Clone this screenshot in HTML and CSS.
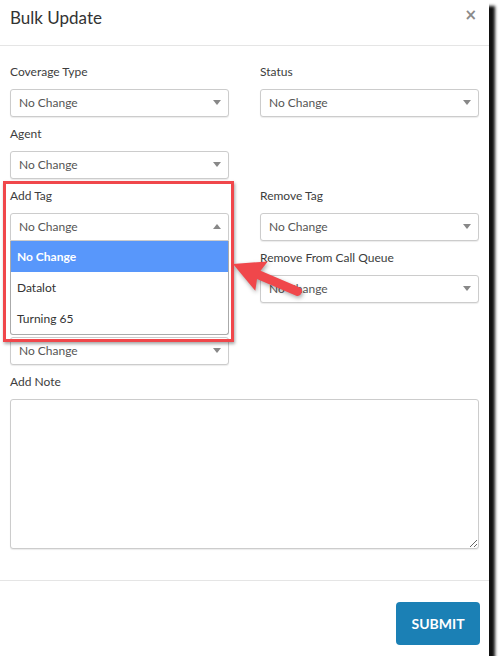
FILE: index.html
```html
<!DOCTYPE html>
<html>
<head>
<meta charset="utf-8">
<link rel="stylesheet" href="styles.css">
</head>
<body>
<div class="modal">
  <div class="header">
    <h1 class="title">Bulk Update</h1>
    <span class="close">×</span>
  </div>
  <div class="body">
    <div class="grid">
      <div class="group">
        <label class="label">Coverage Type</label>
        <div class="select"><span>No Change</span><i class="caret"></i></div>
      </div>
      <div class="group">
        <label class="label">Status</label>
        <div class="select"><span>No Change</span><i class="caret"></i></div>
      </div>
      <div class="group">
        <label class="label">Agent</label>
        <div class="select"><span>No Change</span><i class="caret"></i></div>
      </div>
      <div class="group"></div>
      <div class="group open-group">
        <label class="label">Add Tag</label>
        <div class="select open"><span>No Change</span><i class="caret up"></i></div>
        <ul class="dropdown">
          <li class="opt active">No Change</li>
          <li class="opt">Datalot</li>
          <li class="opt">Turning 65</li>
        </ul>
      </div>
      <div class="group">
        <label class="label">Remove Tag</label>
        <div class="select"><span>No Change</span><i class="caret"></i></div>
      </div>
      <div class="group">
        <label class="label"></label>
        <div class="select"><span></span><i class="caret"></i></div>
      </div>
      <div class="group">
        <label class="label">Remove From Call Queue</label>
        <div class="select"><span>No Change</span><i class="caret"></i></div>
      </div>
      <div class="group">
        <label class="label"></label>
        <div class="select"><span>No Change</span><i class="caret"></i></div>
      </div>
      <div class="group"></div>
    </div>
    <div class="note">
      <label class="label">Add Note</label>
      <textarea class="textarea"></textarea>
    </div>
  </div>
  <div class="footer">
    <button class="submit">SUBMIT</button>
  </div>

  <div class="highlight"></div>
  <svg class="arrow" width="90" height="60" viewBox="0 0 90 60">
    <g transform="translate(8 19) rotate(23)">
      <path d="M0 0 L31 -16 L28 -4.5 L70 -4.5 Q74.5 -4.5 74.5 0 Q74.5 4.5 70 4.5 L28 4.5 L31 16 Z" fill="#f0474b"/>
    </g>
  </svg>
</div>
</body>
</html>
```
FILE: styles.css
```css
html, body {
  margin: 0;
  padding: 0;
  background: #fff;
}
body {
  font-family: Lato, "Noto Sans", sans-serif;
  color: #333;
}
.modal {
  position: relative;
  width: 489px;
  height: 656px;
  background: #fff;
  box-shadow: 6px 6px 3px #111;
  display: flex;
  flex-direction: column;
}
.header {
  box-sizing: border-box;
  height: 46px;
  border-bottom: 1px solid #e5e5e5;
  padding: 7px 12px 0 10px;
  display: flex;
  justify-content: space-between;
  align-items: flex-start;
}
.title {
  margin: 0;
  font-size: 17px;
  font-weight: 400;
  line-height: 22px;
  color: #333;
}
.close {
  font-family: "DejaVu Sans", sans-serif;
  font-size: 15px;
  font-weight: 700;
  color: #8a8a8a;
  line-height: 16px;
  margin-top: 0;
}
.body {
  padding: 17px 10px 31px 10px;
  flex: 1;
}
.grid {
  display: grid;
  grid-template-columns: 219px 219px;
  column-gap: 31px;
}
.group {
  position: relative;
  height: 62px;
}
.label {
  display: block;
  font-size: 12px;
  line-height: 18px;
  height: 18px;
  margin-bottom: 8px;
  color: #3d3d3d;
}
.select {
  box-sizing: border-box;
  height: 28px;
  border: 1px solid #ccc;
  border-radius: 3px;
  box-shadow: 0 1px 1px rgba(0,0,0,0.08);
  display: flex;
  align-items: center;
  justify-content: space-between;
  padding: 0 7px 0 8px;
  font-size: 12px;
  color: #555;
  background: #fff;
}
.select.open {
  border-bottom-left-radius: 0;
  border-bottom-right-radius: 0;
}
.caret {
  width: 0;
  height: 0;
  border-style: solid;
  border-width: 5px 4px 0 4px;
  border-color: #888 transparent transparent transparent;
}
.caret.up {
  border-width: 0 4px 5px 4px;
  border-color: transparent transparent #888 transparent;
}
.dropdown {
  position: absolute;
  top: 54px;
  left: 0;
  width: 219px;
  box-sizing: border-box;
  margin: 0;
  padding: 0;
  list-style: none;
  background: #fff;
  border: 1px solid #aaa;
  border-top: none;
  border-radius: 0 0 3px 3px;
  z-index: 2;
}
.opt {
  height: 31px;
  line-height: 31px;
  padding: 0 6px;
  font-size: 12px;
  color: #333;
}
.opt.active {
  background: #5897fb;
  color: #fff;
  font-weight: 700;
}
.note .label {
  margin-bottom: 8px;
}
.textarea {
  display: block;
  box-sizing: border-box;
  width: 469px;
  height: 150px;
  margin: 0;
  border: 1px solid #ccc;
  border-radius: 3px;
  box-shadow: 0 1px 1px rgba(0,0,0,0.08);
  resize: both;
  font-family: inherit;
}
.footer {
  box-sizing: border-box;
  height: 77px;
  border-top: 1px solid #e5e5e5;
  padding: 21px 9px 0 0;
  display: flex;
  justify-content: flex-end;
  align-items: flex-start;
}
.submit {
  width: 84px;
  height: 43px;
  background: #1b80b5;
  color: #fff;
  border: none;
  border-radius: 4px;
  font-family: inherit;
  font-size: 14px;
  font-weight: 700;
  padding: 0;
}
.highlight {
  position: absolute;
  left: 3px;
  top: 181px;
  width: 225px;
  height: 155px;
  border: 3px solid #f0474b;
  box-shadow: 1px 2px 3px rgba(0,0,0,0.35);
  z-index: 3;
  pointer-events: none;
}
.arrow {
  position: absolute;
  left: 225px;
  top: 245px;
  z-index: 4;
  filter: drop-shadow(1px 2px 2px rgba(0,0,0,0.35));
}
```
